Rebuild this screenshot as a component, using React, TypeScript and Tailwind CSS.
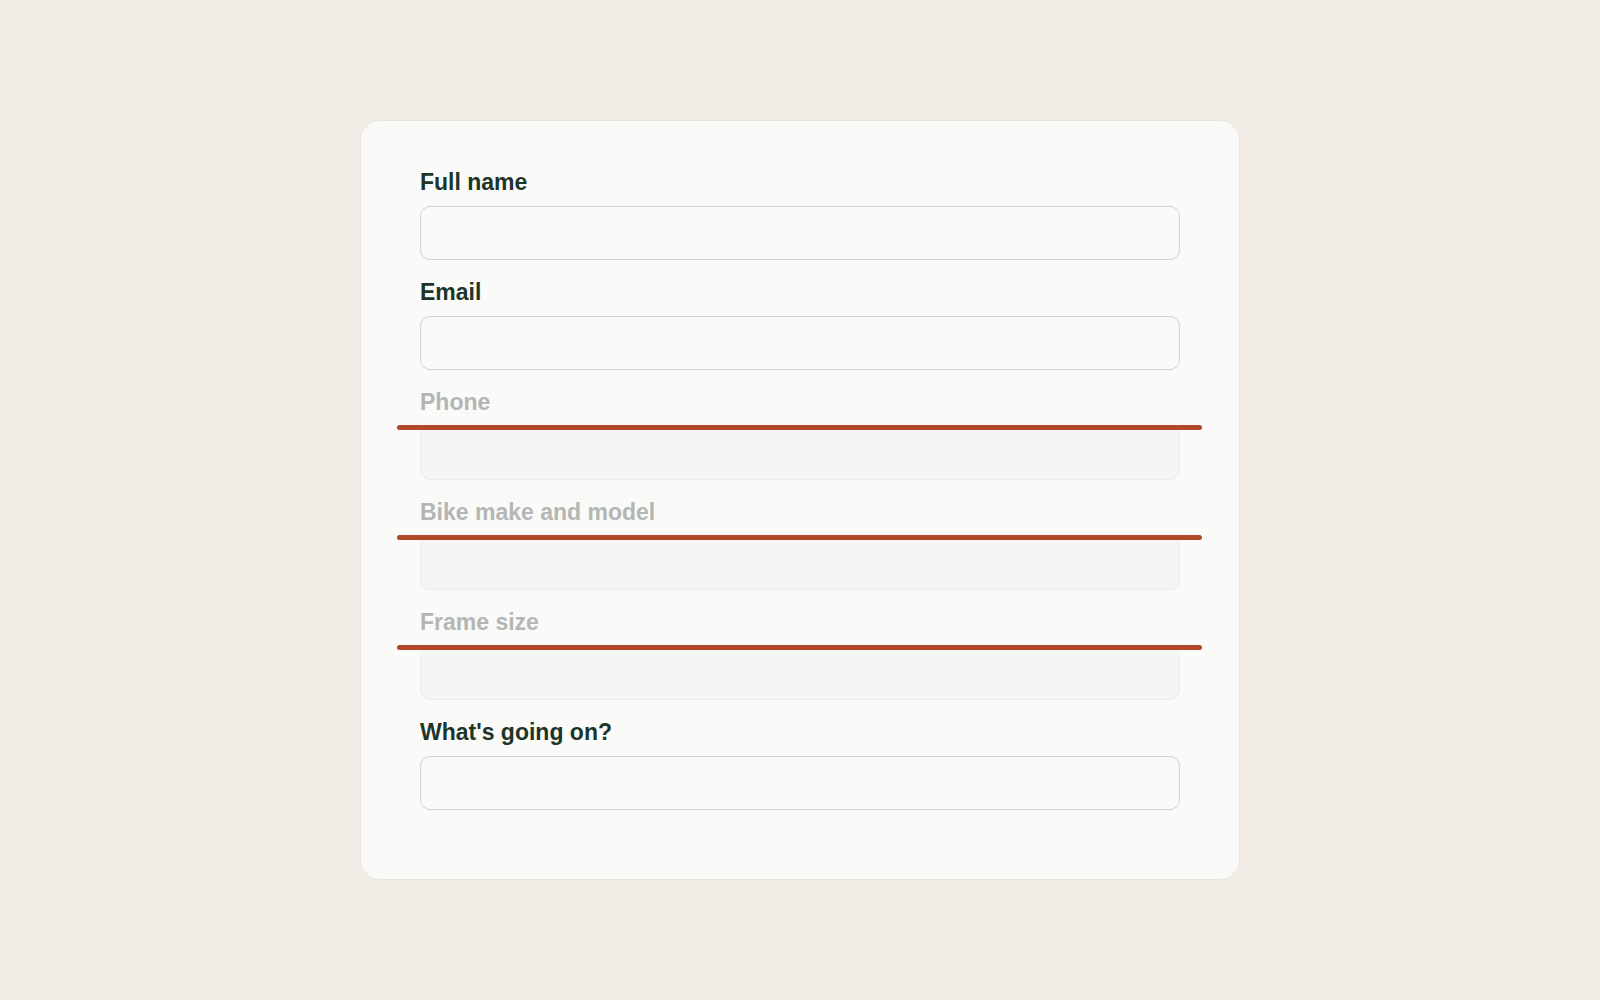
import React from 'react'

type Field = {
  label: string
  struck?: boolean
}

const fields: Field[] = [
  { label: 'Full name' },
  { label: 'Email' },
  { label: 'Phone', struck: true },
  { label: 'Bike make and model', struck: true },
  { label: 'Frame size', struck: true },
  { label: "What's going on?" },
]

function FormField({ label, struck }: Field) {
  return (
    <div className="flex flex-col">
      <label
        className={
          struck
            ? 'text-[23px] font-bold leading-[28px] text-[#b4b6b3]'
            : 'text-[23px] font-bold leading-[28px] text-[#1d3529]'
        }
      >
        {label}
      </label>
      <div className="relative mt-[10px]">
        <div
          className={
            struck
              ? 'h-[54px] w-full rounded-[10px] border border-[#ebebea] bg-[#f5f5f4]'
              : 'h-[54px] w-full rounded-[10px] border border-[#d2d2d0] bg-[#fafafa]'
          }
        />
        {/* strike bar across removed fields */}
        {struck && (
          <div className="absolute -left-[23px] -right-[22px] -top-[1px] h-[5px] rounded-full bg-[#b0482a]" />
        )}
      </div>
    </div>
  )
}

export default function App() {
  return (
    <div
      className="flex min-h-screen items-center justify-center bg-[#f1ede6]"
      style={{ fontFamily: '"Liberation Sans", Arial, sans-serif' }}
    >
      <div className="flex h-[760px] w-[880px] flex-col gap-[18px] rounded-[20px] border border-[#e8e5df] bg-[#fafaf9] px-[59px] pt-[47px]">
        {fields.map((field) => (
          <FormField key={field.label} {...field} />
        ))}
      </div>
    </div>
  )
}
